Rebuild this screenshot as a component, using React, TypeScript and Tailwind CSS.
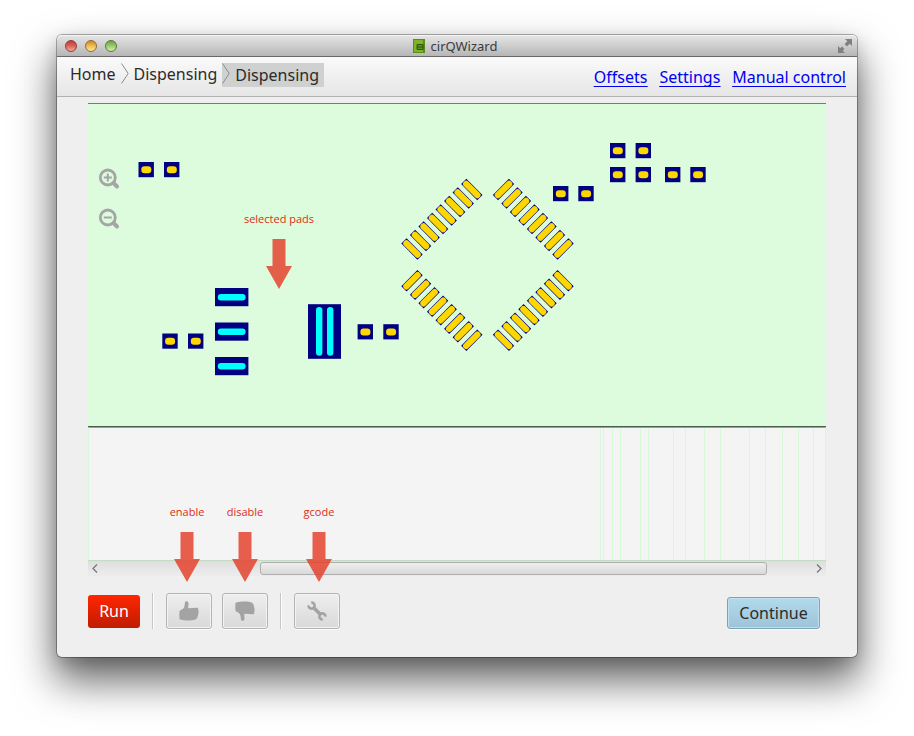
import type { ReactNode } from "react";

const smallPads: [number, number][] = [
  [50.5, 59], [76, 59], [74.3, 230.5], [100, 230.5], [269.6, 221.2], [295.3, 221.2],
  [465, 83], [490.3, 83], [522, 40], [547.6, 40], [522, 64], [547.6, 64], [577, 64], [602.3, 64],
];

const widePads = [185, 219.5, 254];

const padRows = [
  { from: [324, 146], to: [383.8, 86.5], angle: 45 },
  { from: [415.5, 86.5], to: [475, 146], angle: -45 },
  { from: [324, 177.7], to: [383.8, 237.3], angle: -45 },
  { from: [415.5, 237.3], to: [475, 177.7], angle: 45 },
];

const traces = [512, 515, 524, 532, 552, 560, 585, 597, 616, 632, 661, 677, 694, 710, 725];

function Board() {
  return (
    <svg className="block h-[324px] w-full border-y border-t-[#5f8a62] border-b-[#47604a] bg-[#ddfcdd]" aria-label="Board">
      <g transform="translate(0 -1)">
        {smallPads.map(([x, y]) => (
          <g key={`${x}-${y}`}>
            <rect x={x} y={y} width="15.4" height="15.2" fill="#000080" />
            <rect x={x + 2.8} y={y + 4.2} width="10" height="7" rx="3.2" fill="#ffd700" />
          </g>
        ))}
        {widePads.map((y) => (
          <g key={y}>
            <rect x="127" y={y} width="33.4" height="18.2" fill="#000080" />
            <rect x="129.8" y={y + 6} width="27.8" height="6.4" rx="3.2" fill="#00ffff" />
          </g>
        ))}
        <rect x="220" y="201.2" width="33" height="54.6" fill="#000080" />
        <rect x="228" y="204" width="6.4" height="48.8" rx="3.2" fill="#00ffff" />
        <rect x="239" y="204" width="6.4" height="48.8" rx="3.2" fill="#00ffff" />
        {padRows.map((row, r) =>
          Array.from({ length: 8 }, (_, i) => {
            const x = row.from[0] + ((row.to[0] - row.from[0]) * i) / 7;
            const y = row.from[1] + ((row.to[1] - row.from[1]) * i) / 7;
            return (
              <g key={`${r}-${i}`} transform={`translate(${x} ${y}) rotate(${row.angle})`}>
                <rect x="-11.4" y="-3.7" width="22.8" height="7.4" fill="#000080" />
                <rect x="-11" y="-3.1" width="22" height="6.2" rx="2.8" fill="#ffd700" />
              </g>
            );
          }),
        )}
      </g>
    </svg>
  );
}

function Magnifier({ plus }: { plus?: boolean }) {
  return (
    <svg width="22" height="22" viewBox="0 0 22 22" fill="none" stroke="#a5a5a5" aria-hidden="true">
      <circle cx="9.8" cy="9.5" r="7.5" strokeWidth="2.8" />
      <path d="M15.500 15l3.500 3.500" strokeWidth="4" strokeLinecap="round" />
      <path d={plus ? "M5.8 9.5h8M9.800 5.5v8" : "M5.8 9.5h8"} strokeWidth="2" />
    </svg>
  );
}

function Callout({ className, children }: { className: string; children: ReactNode }) {
  return (
    <div className={`pointer-events-none absolute flex w-20 flex-col items-center gap-3 ${className}`}>
      <span className="font-['Open_Sans',sans-serif] text-[11px] leading-4 font-medium whitespace-nowrap text-[#dd2c14]">{children}</span>
      <svg width="26" height="50" viewBox="0 0 26 50" fill="#e4402c" fillOpacity="0.84" aria-hidden="true">
        <path d="M6.500 0h13v27H26L13 50 0 27h6.500z" />
      </svg>
    </div>
  );
}

function ToolButton({ label, children }: { label: string; children: ReactNode }) {
  return (
    <button
      type="button"
      aria-label={label}
      className="flex h-9 w-[46px] items-center justify-center rounded-[3px] border border-[#b4b4b4] bg-linear-to-b from-[#eeeeee] to-[#d9d9d9] shadow-[0_1px_0_#fbfbfb,inset_0_0_0_1px_#f3f3f3]"
    >
      <svg width="20" height="20" viewBox="0 0 20 20" fill="#a3a3a3" aria-hidden="true">
        {children}
      </svg>
    </button>
  );
}

const thumb =
  "M7.500 .3c1.300 0 2.100 .9 2 2.300L9.200 7.200l8.300-.4c1.200 0 1.900.6 1.900 1.500 0 .6-.1 1-.2 1.300.5.5.6 1.300.2 2 .3.7.2 1.500-.3 2 .2.800 0 1.500-.5 1.900 0 .8-.2 1.500-.8 2.100-1 1.300-4 1.900-8 1.900-3 0-7-.5-9.300-1.300C.2 15.500.2 13 .5 10.200 1.500 8.700 3.500 8.500 4.800 7 5.600 5.500 5.800 3.500 5.900 1.800 6 .800 6.600.3 7.500.3z";

function Separator() {
  return <div className="h-9 w-[2px] border-r border-l border-r-[#fcfcfc] border-l-[#c6c6c6]" />;
}

function CrumbArrow() {
  return (
    <svg className="self-start" width="8" height="22" viewBox="0 0 8 22" fill="none" stroke="#8b8b90" aria-hidden="true">
      <path d="M.5 .5L7.200 10.500 .5 20.500" />
    </svg>
  );
}

const lights = [
  "from-[#b8403a] via-[#dd6257] to-[#f5aaa0] border-[#8d3b37]",
  "from-[#c98a2c] via-[#ecbd50] to-[#fbe9a0] border-[#94692c]",
  "from-[#6f9f45] via-[#9ccb6c] to-[#d5f0ac] border-[#56783a]",
];

export default function App() {
  return (
    <div className="overflow-hidden bg-white px-[57px] pt-[35px] pb-[79px] font-['Noto_Sans',sans-serif] text-[#2b2b2b]">
      <main className="rounded-[5px] bg-[#efefef] shadow-[0_0_0_1px_rgba(0,0,0,0.3),0_22px_40px_2px_rgba(0,0,0,0.6),0_6px_16px_rgba(0,0,0,0.15)]">
        <header className="flex h-[22px] items-center justify-between rounded-t-[5px] border-b border-[#686868] bg-linear-to-b from-[#e6e6e6] to-[#b6b6b6] pr-1 pl-2 shadow-[inset_0_1px_0_#f4f4f4]">
          <div className="flex w-[72px] gap-2">
            {lights.map((tone) => (
              <button key={tone} type="button" aria-label="Window control" className={`size-3 rounded-full border bg-linear-to-b ${tone}`} />
            ))}
          </div>
          <h1 className="flex items-center gap-[6px] text-[13px] leading-5 text-[#3b3b3b]">
            <svg width="12" height="14" viewBox="0 0 12 14" aria-hidden="true">
              <rect width="12" height="14" fill="#5c8a1c" />
              <rect x="1" y="1" width="9" height="12" fill="#7db52a" />
              <path d="M4 5.500h6v5H4zM4 8h6" fill="#5f9420" stroke="#31560c" />
            </svg>
            cirQWizard
          </h1>
          <div className="flex w-20 justify-end">
            <svg width="16" height="16" viewBox="0 0 16 16" fill="#808080" aria-hidden="true">
              <path d="M8 1h7v7l-2.300-2.300-2.700 2.700-2.400-2.400 2.700-2.700zM8 15H1V8l2.300 2.300L5 8.600 7.400 11l-1.700 1.700z" />
            </svg>
          </div>
        </header>

        <div className="flex h-10 items-start justify-between border-b border-[#b2b2b2] bg-linear-to-b from-[#fafafa] to-[#e6e6e6] pt-[6px] pr-[11px] pl-[13px]">
          <nav aria-label="Breadcrumb" className="flex h-6 items-center gap-[5px] text-base leading-[22px] whitespace-nowrap">
            <a href="#home" className="self-start">Home</a>
            <CrumbArrow />
            <a href="#job" className="self-start">Dispensing</a>
            <span className="flex h-6 items-center gap-[5px] bg-[#cfd0d0] pr-[5px]">
              <CrumbArrow />
              <a href="#dispensing" aria-current="page">Dispensing</a>
            </span>
          </nav>
          <nav aria-label="Tools" className="flex gap-3 pt-[2px] text-base leading-6 whitespace-nowrap text-[#0000f0] underline decoration-1 underline-offset-[3px] [text-decoration-skip-ink:none]">
            <a href="#offsets">Offsets</a>
            <a href="#settings">Settings</a>
            <a href="#manual">Manual control</a>
          </nav>
        </div>

        <section className="relative mx-[31px] mt-[6px]">
          <Board />
          <svg className="block h-[133px] w-full border-x border-t border-x-[#d8f8d8] border-t-[#8fa891] bg-[#f4f4f4]" aria-hidden="true">
            {traces.map((x) => (
              <rect key={x} x={x - 1} y="0" width="1" height="132" fill="#d8f8d8" />
            ))}
          </svg>
          <div className="flex h-4 items-center border-t border-b border-t-[#c4dcc4] border-b-[#d8f8d8] bg-linear-to-b from-[#dedede] to-[#ececec] px-1">
            <svg width="7" height="9" viewBox="0 0 7 9" fill="none" stroke="#777" strokeWidth="1.300" aria-hidden="true">
              <path d="M5 .5l-4 4 4 4" />
            </svg>
            <div className="flex flex-1 pr-[48px] pl-[161px]">
              <div className="h-[13px] w-full rounded-[3px] border border-[#adadad] bg-linear-to-b from-[#eeeeee] to-[#d9d9d9]" />
            </div>
            <svg width="7" height="9" viewBox="0 0 7 9" fill="none" stroke="#777" strokeWidth="1.300" aria-hidden="true">
              <path d="M2 .5l4 4-4 4" />
            </svg>
          </div>

          <div className="absolute top-[65px] left-[10px] flex flex-col gap-[18px]">
            <button type="button" aria-label="Zoom in"><Magnifier plus /></button>
            <button type="button" aria-label="Zoom out"><Magnifier /></button>
          </div>
          <Callout className="top-[108px] left-[151px]">selected pads</Callout>
          <Callout className="top-[401px] left-[59px]">enable</Callout>
          <Callout className="top-[401px] left-[117px]">disable</Callout>
          <Callout className="top-[401px] left-[191px]">gcode</Callout>
        </section>

        <footer className="flex items-center pt-[17px] pr-[37px] pb-7 pl-[31px]">
          <button type="button" className="h-[33px] w-[52px] rounded-[3px] bg-linear-to-b from-[#ff2600] to-[#bf1d00] text-base text-white">Run</button>
          <div className="flex gap-3 pl-3">
            <Separator />
            <div className="flex gap-[10px]">
              <ToolButton label="Enable">
                <path d={thumb} />
              </ToolButton>
              <ToolButton label="Disable">
                <path d={thumb} transform="matrix(1 0 0 -1 0 20)" />
              </ToolButton>
            </div>
            <Separator />
            <ToolButton label="G-code">
              <g fill="none" stroke="#a3a3a3">
                <path d="M6 6l8 8" strokeWidth="3.600" />
                <path d="M4.300 1.600A3 3 0 1 1 1.600 4.300M15.700 18.400A3 3 0 1 1 18.400 15.700" strokeWidth="2.600" />
              </g>
            </ToolButton>
          </div>
          <button type="button" className="ml-auto h-8 w-[93px] self-end rounded-[3px] border border-[#7ca4b6] bg-linear-to-b from-[#b3daeb] to-[#9cc3d8] text-base shadow-[inset_0_0_0_1px_#bfe0ee,0_1px_0_#fafafa]">Continue</button>
        </footer>
      </main>
    </div>
  );
}
